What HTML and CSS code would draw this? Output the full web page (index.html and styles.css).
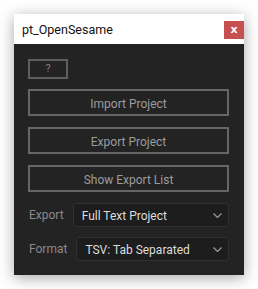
FILE: index.html
```html
<!DOCTYPE html>
<html lang="en">
<head>
    <meta charset="UTF-8">
    <title>pt_OpenSesame</title>
    <link rel="stylesheet" href="styles.css">
</head>
<body>
    <div class="window">
        <div class="titlebar">
            <span class="title">pt_OpenSesame</span>
            <button class="close-button">x</button>
        </div>
        <div class="panel">
            <button class="help-button">?</button>
            <button class="action-button">Import Project</button>
            <button class="action-button">Export Project</button>
            <button class="action-button">Show Export List</button>

            <div class="field-row">
                <span class="field-label">Export</span>
                <div class="dropdown">
                    <span>Full Text Project</span>
                    <svg class="chevron" width="9" height="5" viewBox="0 0 9 5"><path d="M0.5 0.5 L4.5 4.5 L8.5 0.5" fill="none" stroke="#9a9a9a" stroke-width="1.2"/></svg>
                </div>
            </div>
            <div class="field-row">
                <span class="field-label">Format</span>
                <div class="dropdown">
                    <span>TSV: Tab Separated</span>
                    <svg class="chevron" width="9" height="5" viewBox="0 0 9 5"><path d="M0.5 0.5 L4.5 4.5 L8.5 0.5" fill="none" stroke="#9a9a9a" stroke-width="1.2"/></svg>
                </div>
            </div>
        </div>
    </div>
</body>
</html>
```

FILE: styles.css
```css
* {
    box-sizing: border-box;
}

body {
    margin: 0;
    padding: 14px;
    background: #ffffff;
    font-family: Roboto, 'Noto Sans', sans-serif;
}

.window {
    width: 230px;
    box-shadow: 0 3px 14px rgba(0, 0, 0, 0.35);
}

.titlebar {
    height: 30px;
    background: #ffffff;
    display: flex;
    justify-content: space-between;
    align-items: flex-start;
}

.title {
    font-size: 12.5px;
    color: #111;
    margin: 8px 0 0 8px;
    line-height: 16px;
}

.close-button {
    margin-top: 7px;
    width: 20px;
    height: 18px;
    border: none;
    padding: 0;
    background: #c75050;
    color: white;
    font-size: 11px;
    font-weight: bold;
    font-family: 'DejaVu Sans', sans-serif;
    line-height: 16px;
}

.panel {
    height: 231px;
    background: #232323;
    padding: 15px 15px 0 14px;
    display: flex;
    flex-direction: column;
}

button {
    font-family: Roboto, 'Noto Sans', sans-serif;
    cursor: pointer;
    flex-shrink: 0;
}

.help-button {
    width: 40px;
    height: 20px;
    background: transparent;
    border: 2px solid #5e5e5e;
    color: #7d7d8e;
    font-size: 11px;
    padding: 0;
    line-height: 14px;
    margin-bottom: 10px;
}

.action-button {
    height: 27px;
    background: transparent;
    border: 2px solid #666666;
    color: #9c9c9c;
    font-size: 12px;
    padding: 2px 0 0;
    margin-bottom: 11px;
}

.field-row {
    height: 24px;
    display: flex;
    align-items: center;
    gap: 9px;
    margin-bottom: 10px;
    padding-left: 1px;
    flex-shrink: 0;
}

.field-label {
    color: #8a8a8a;
    font-size: 12px;
}

.dropdown {
    flex: 1;
    height: 24px;
    background: #1d1d1d;
    border: 1px solid #303030;
    border-radius: 3px;
    display: flex;
    align-items: center;
    justify-content: space-between;
    padding: 1px 6px 0 8px;
    color: #dcdcdc;
    font-size: 12px;
}

.chevron {
    display: block;
}
```
